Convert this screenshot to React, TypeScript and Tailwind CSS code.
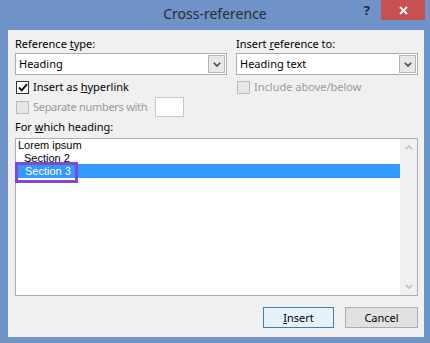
import React from 'react';

const font = { fontFamily: '"Noto Sans", "Open Sans", sans-serif' };
const listFont = { fontFamily: '"Liberation Sans", Arial, sans-serif' };

const Chevron = ({ up = false, color = '#444' }: { up?: boolean; color?: string }) => (
    <svg width="8" height="5" viewBox="0 0 8 5" className={up ? 'rotate-180' : ''}>
        <path d="M0.8 0.8 L4 4 L7.2 0.8" fill="none" stroke={color} strokeWidth="1.6" />
    </svg>
);

const Combo = ({ value, width }: { value: string; width: string }) => (
    <div className={`${width} h-[22px] flex bg-white border border-[#abadb3]`}>
        <div className="flex-1 flex items-center pl-[3px] text-[11px] text-black">{value}</div>
        <div className="w-[17px] my-[1px] mr-[1px] flex items-center justify-center bg-[#e8e8e8] border border-[#b5b5b5]">
            <Chevron />
        </div>
    </div>
);

const CheckBox = ({ checked = false, disabled = false }: { checked?: boolean; disabled?: boolean }) => (
    <div
        className={`w-[13px] h-[13px] shrink-0 flex items-center justify-center border ${
            disabled ? 'bg-[#e6e6e6] border-[#bcbcbc]' : 'bg-white border-[#333]'
        }`}
    >
        {checked && (
            <svg width="10" height="9" viewBox="0 0 10 9">
                <path d="M1 4.5 L3.8 7.3 L9 1.2" fill="none" stroke="#111" strokeWidth="1.9" />
            </svg>
        )}
    </div>
);

export default function App() {
    return (
        <div className="w-[430px] h-[343px] bg-[#6f92c9] flex flex-col overflow-hidden" style={font}>
            {/* Title bar */}
            <div className="h-[30px] grid grid-cols-[1fr_auto_1fr]">
                <div />
                <div className="pt-[4px] text-[14px] leading-[20px] text-[#2b2b2b]">Cross-reference</div>
                <div className="flex justify-end items-start">
                    <div className="mt-[3px] mr-[11px] text-[13px] leading-[15px] font-bold text-[#1f2a3a]">?</div>
                    <div className="w-[44px] h-[20px] mr-[5px] bg-[#c75050] flex items-center justify-center">
                        <svg width="9" height="9" viewBox="0 0 9 9">
                            <path d="M1 1 L8 8 M8 1 L1 8" stroke="#fff" strokeWidth="1.8" />
                        </svg>
                    </div>
                </div>
            </div>

            {/* Body */}
            <div className="ml-[8px] mr-[6px] h-[307px] bg-[#f0f0f0] pl-[7px] pr-[6px] pt-[6px] text-[11px] text-black">
                <div className="grid grid-cols-[212px_182px] gap-x-[9px]">
                    <div className="flex flex-col">
                        <div className="h-[15px] leading-[15px]">
                            Reference <span className="underline">t</span>ype:
                        </div>
                        <div className="mt-[2px]">
                            <Combo value="Heading" width="w-[212px]" />
                        </div>
                        <div className="mt-[5px] h-[14px] flex items-center gap-[4px] pl-[1px]">
                            <CheckBox checked />
                            <span className="leading-[14px]">
                                Insert as <span className="underline">h</span>yperlink
                            </span>
                        </div>
                        <div className="mt-[3px] w-[169px] h-[20px] flex items-center pl-[1px]">
                            <CheckBox disabled />
                            <span className="ml-[4px] tracking-[-0.3px] text-[#9a9a9a]">Separate numbers with</span>
                            <div className="ml-auto w-[29px] h-[20px] bg-white border border-[#c8c8c8]" />
                        </div>
                    </div>
                    <div className="flex flex-col">
                        <div className="h-[15px] leading-[15px]">
                            Insert <span className="underline">r</span>eference to:
                        </div>
                        <div className="mt-[2px]">
                            <Combo value="Heading text" width="w-[182px]" />
                        </div>
                        <div className="mt-[5px] h-[14px] flex items-center gap-[4px] pl-[1px]">
                            <CheckBox disabled />
                            <span className="leading-[14px] text-[#9a9a9a]">Include above/below</span>
                        </div>
                    </div>
                </div>

                <div className="mt-[2px] h-[15px] leading-[15px]">
                    For <span className="underline">w</span>hich heading:
                </div>

                {/* Heading list */}
                <div className="relative mt-[4px] h-[158px] bg-white border border-[#abadb3] flex">
                    <div className="flex-1 flex flex-col text-[11px]" style={listFont}>
                        <div className="h-[13px] leading-[13px] pl-[2px]">Lorem ipsum</div>
                        <div className="h-[13px] leading-[13px] pl-[8px]">Section 2</div>
                        <div className="h-[13px] leading-[13px] pl-[9px] bg-[#3399ff] shadow-[0_-1px_0_#3399ff] text-white">
                            Section 3
                        </div>
                    </div>
                    <div className="w-[17px] bg-[#f0f0f0] flex flex-col justify-between">
                        <div className="h-[17px] flex items-center justify-center">
                            <Chevron up color="#bdbdbd" />
                        </div>
                        <div className="h-[17px] flex items-center justify-center">
                            <Chevron color="#bdbdbd" />
                        </div>
                    </div>
                    {/* annotation box */}
                    <div className="absolute left-[-1px] top-[23px] w-[63px] h-[21px] border-[3px] border-[#8148d6]" />
                </div>

                {/* Buttons */}
                <div className="mt-[11px] flex justify-end gap-[11px]">
                    <button className="w-[71px] h-[21px] bg-[#e5f1fb] border border-[#3c7fb1] text-[11px] leading-[19px]">
                        <span className="underline">I</span>nsert
                    </button>
                    <button className="w-[73px] h-[21px] bg-[#e1e1e1] border border-[#adadad] text-[11px] leading-[19px]">
                        Cancel
                    </button>
                </div>
            </div>
        </div>
    );
}
